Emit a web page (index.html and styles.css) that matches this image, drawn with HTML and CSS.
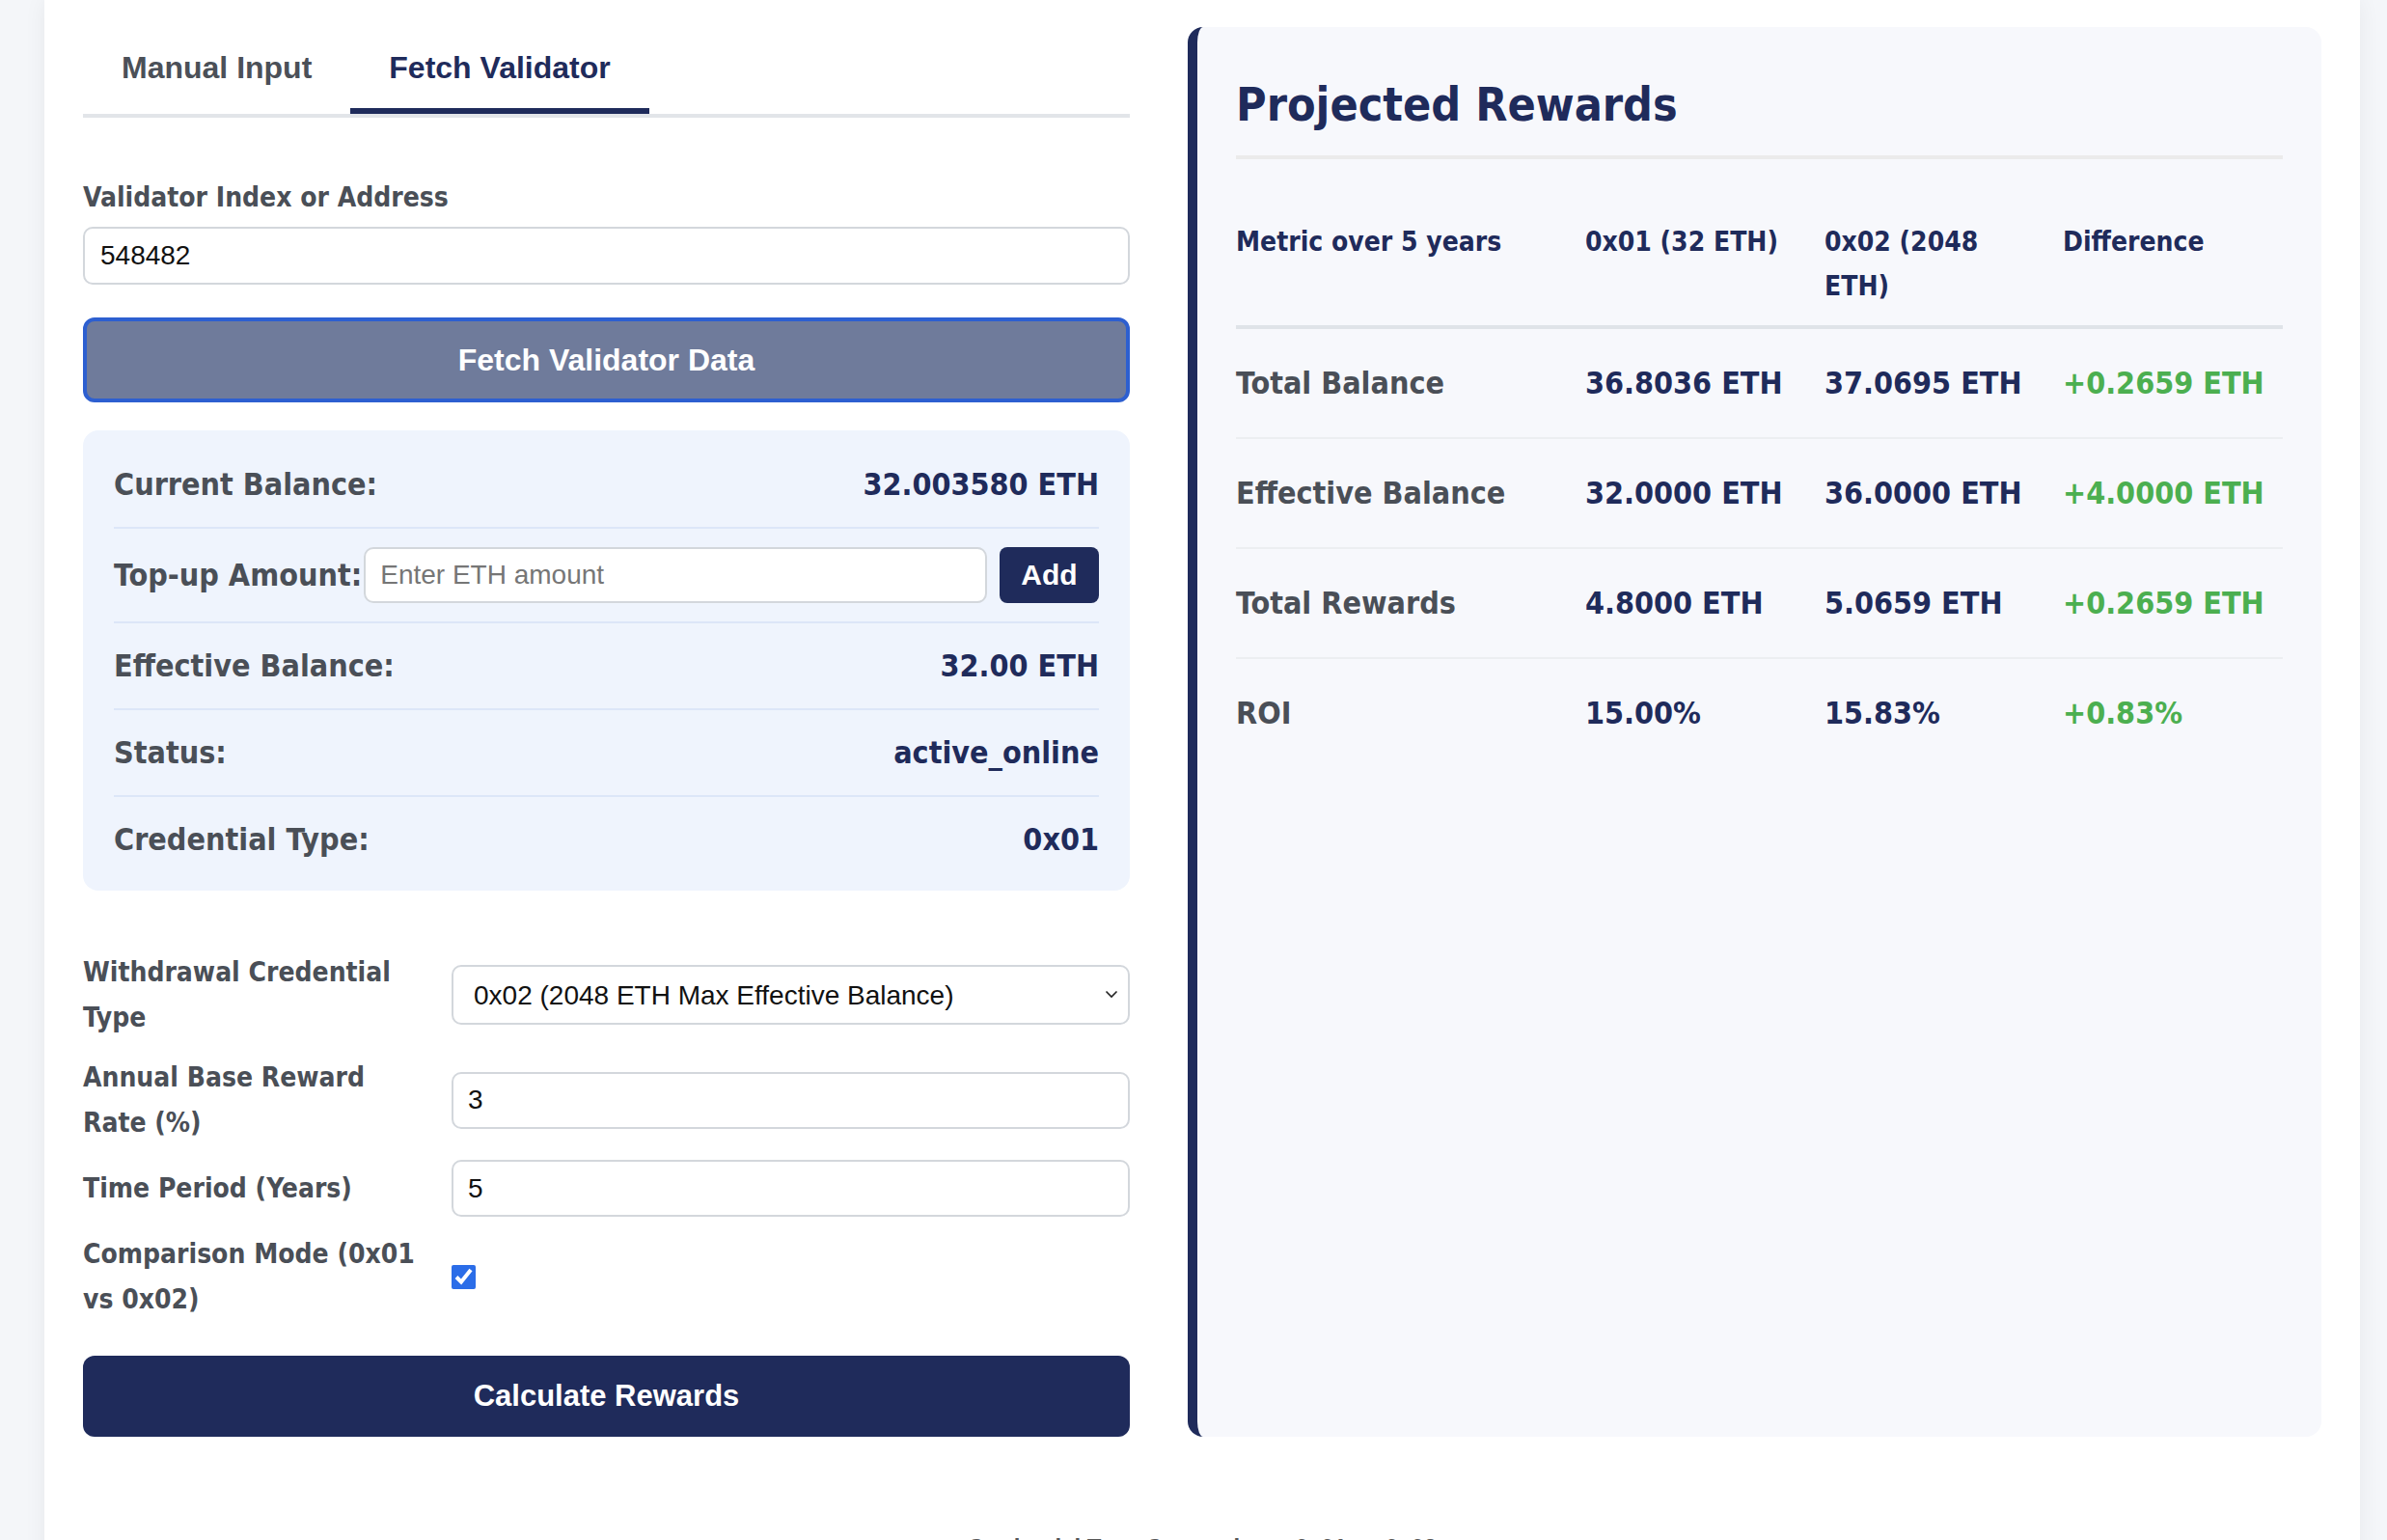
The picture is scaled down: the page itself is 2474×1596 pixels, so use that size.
FILE: index.html
```html
<!DOCTYPE html>
<html lang="en">
<head>
<meta charset="utf-8">
<title>Validator Rewards Calculator</title>
<link rel="stylesheet" href="styles.css">
</head>
<body>
<main class="container">
  <div class="calc-grid">
    <section class="input-col">
      <div class="tabs">
        <button class="tab">Manual Input</button>
        <button class="tab active">Fetch Validator</button>
      </div>

      <label class="field-label" for="vidx">Validator Index or Address</label>
      <input id="vidx" class="text-input" type="text" value="548482">
      <button class="btn-fetch">Fetch Validator Data</button>

      <div class="info-box">
        <div class="info-row">
          <span class="info-label">Current Balance:</span>
          <span class="info-value">32.003580 ETH</span>
        </div>
        <div class="info-row topup">
          <span class="info-label">Top-up Amount:</span>
          <input class="topup-input" type="text" placeholder="Enter ETH amount">
          <button class="btn-add">Add</button>
        </div>
        <div class="info-row">
          <span class="info-label">Effective Balance:</span>
          <span class="info-value">32.00 ETH</span>
        </div>
        <div class="info-row">
          <span class="info-label">Status:</span>
          <span class="info-value">active_online</span>
        </div>
        <div class="info-row">
          <span class="info-label">Credential Type:</span>
          <span class="info-value">0x01</span>
        </div>
      </div>

      <div class="form-grid">
        <label class="form-label" for="ctype">Withdrawal Credential Type</label>
        <div class="select-wrap">
          <select id="ctype" class="select">
            <option>0x02 (2048 ETH Max Effective Balance)</option>
            <option>0x01 (32 ETH Max Effective Balance)</option>
          </select>
          <svg class="chev" width="14" height="9" viewBox="0 0 14 9" aria-hidden="true"><polyline points="1.5,1.5 7,7 12.5,1.5" fill="none" stroke="#222" stroke-width="1.6"/></svg>
        </div>

        <label class="form-label" for="rate">Annual Base Reward Rate (%)</label>
        <input id="rate" class="form-input" type="text" value="3">

        <label class="form-label" for="years">Time Period (Years)</label>
        <input id="years" class="form-input" type="text" value="5">

        <label class="form-label" for="cmp">Comparison Mode (0x01 vs 0x02)</label>
        <div class="check-cell"><input id="cmp" class="checkbox" type="checkbox" checked></div>
      </div>

      <button class="btn-calc">Calculate Rewards</button>
    </section>

    <section class="results">
      <h2 class="results-title">Projected Rewards</h2>
      <table class="results-table">
        <colgroup>
          <col class="c1"><col class="c2"><col class="c3"><col class="c4">
        </colgroup>
        <thead>
          <tr>
            <th>Metric over 5 years</th>
            <th>0x01 (32 ETH)</th>
            <th>0x02 (2048 ETH)</th>
            <th>Difference</th>
          </tr>
        </thead>
        <tbody>
          <tr>
            <td class="metric">Total Balance</td>
            <td>36.8036 ETH</td>
            <td>37.0695 ETH</td>
            <td class="diff">+0.2659 ETH</td>
          </tr>
          <tr>
            <td class="metric">Effective Balance</td>
            <td>32.0000 ETH</td>
            <td>36.0000 ETH</td>
            <td class="diff">+4.0000 ETH</td>
          </tr>
          <tr>
            <td class="metric">Total Rewards</td>
            <td>4.8000 ETH</td>
            <td>5.0659 ETH</td>
            <td class="diff">+0.2659 ETH</td>
          </tr>
          <tr>
            <td class="metric">ROI</td>
            <td>15.00%</td>
            <td>15.83%</td>
            <td class="diff">+0.83%</td>
          </tr>
        </tbody>
      </table>
    </section>
  </div>

  <h3 class="footer-title">Credential Type Comparison: 0x01 vs 0x02</h3>
</main>
</body>
</html>
```

FILE: styles.css
```css
html, body {
  margin: 0;
  padding: 0;
}

body {
  background: #f4f6f9;
  font-family: "DejaVu Sans Condensed", "DejaVu Sans", sans-serif;
  color: #1f2b5b;
  overflow: hidden;
}

.container {
  width: 2400px;
  min-height: 1700px;
  margin-left: 46px;
  box-sizing: border-box;
  padding: 28px 40px 0;
  background: #ffffff;
  box-shadow: 0 0 22px rgba(0, 0, 0, 0.06);
}

.calc-grid {
  display: grid;
  grid-template-columns: 1085px 1fr;
  column-gap: 60px;
  align-items: stretch;
}

/* ---------- tabs ---------- */
.tabs {
  display: flex;
  border-bottom: 4px solid #e2e5e9;
}

.tab {
  font-family: "Liberation Sans", Arial, sans-serif;
  font-weight: bold;
  font-size: 32px;
  line-height: 36px;
  padding: 24px 40px;
  margin: 0;
  border: none;
  border-bottom: 6px solid transparent;
  background: none;
  color: #4b5058;
}

.tab.active {
  color: #1f2b5b;
  border-bottom-color: #1f2b5b;
}

/* ---------- fetch pane ---------- */
.field-label {
  display: block;
  margin: 66px 0 14px;
  font-weight: bold;
  font-size: 28px;
  line-height: 33px;
  color: #4a4f57;
}

.text-input,
.form-input,
.topup-input,
.select {
  box-sizing: border-box;
  width: 100%;
  border: 2px solid #d3d7dc;
  border-radius: 10px;
  background: #ffffff;
  font-family: "Liberation Sans", Arial, sans-serif;
  font-size: 28px;
  color: #111111;
  outline: none;
}

.text-input {
  display: block;
  height: 60px;
  padding: 0 16px;
}

.btn-fetch {
  display: block;
  width: 100%;
  height: 88px;
  margin-top: 34px;
  background: #6f7b9b;
  border: 4px solid #2d5fd0;
  border-radius: 12px;
  color: #ffffff;
  font-family: "Liberation Sans", Arial, sans-serif;
  font-weight: bold;
  font-size: 32px;
}

.info-box {
  margin-top: 29px;
  padding: 12px 32px 9px;
  background: #eff4fd;
  border-radius: 16px;
}

.info-row {
  display: flex;
  justify-content: space-between;
  align-items: center;
  padding: 19px 0;
  border-bottom: 2px solid #dce6f8;
  font-size: 32px;
  line-height: 50px;
  font-weight: bold;
}

.info-row:last-child {
  border-bottom: none;
}

.info-label {
  color: #4a4f57;
  white-space: nowrap;
}

.info-value {
  color: #1f2b5b;
}

.info-row.topup {
  justify-content: flex-start;
}

.topup-input {
  flex: 1;
  width: auto;
  min-width: 0;
  height: 58px;
  margin-left: 2px;
  padding: 0 15px;
  font-weight: normal;
}

.topup-input::placeholder {
  color: #767676;
}

.btn-add {
  width: 103px;
  height: 58px;
  margin-left: 13px;
  background: #1f2b5b;
  border: none;
  border-radius: 8px;
  color: #ffffff;
  font-family: "Liberation Sans", Arial, sans-serif;
  font-weight: bold;
  font-size: 30px;
}

/* ---------- settings form ---------- */
.form-grid {
  display: grid;
  grid-template-columns: 352px 1fr;
  column-gap: 30px;
  row-gap: 15px;
  align-items: center;
  margin-top: 61px;
}

.form-label {
  display: block;
  font-weight: bold;
  font-size: 28px;
  line-height: 47px;
  color: #4a4f57;
}

.form-input {
  display: block;
  height: 59px;
  padding: 0 15px;
}

.select-wrap {
  position: relative;
}

.select {
  display: block;
  height: 62px;
  padding: 0 40px 0 21px;
  appearance: none;
  -webkit-appearance: none;
}

.chev {
  position: absolute;
  right: 12px;
  top: 26px;
  pointer-events: none;
}

.check-cell {
  display: flex;
  align-items: center;
}

.checkbox {
  width: 25px;
  height: 25px;
  margin: 0;
  accent-color: #2b6de8;
}

.btn-calc {
  display: block;
  width: 100%;
  height: 84px;
  margin-top: 35px;
  background: #1f2b5b;
  border: none;
  border-radius: 12px;
  color: #ffffff;
  font-family: "Liberation Sans", Arial, sans-serif;
  font-weight: bold;
  font-size: 31px;
}

/* ---------- results panel ---------- */
.results {
  background: #f7f8fc;
  border-left: 10px solid #1f2b5b;
  border-radius: 16px;
  padding: 40px;
}

.results-title {
  margin: 12px 0 0;
  padding-bottom: 25px;
  border-bottom: 4px solid #ebebeb;
  font-size: 48px;
  line-height: 56px;
  font-weight: bold;
  color: #1f2b5b;
}

.results-table {
  width: 100%;
  margin-top: 46px;
  border-collapse: collapse;
  table-layout: fixed;
}

.results-table col.c1 { width: 362px; }
.results-table col.c2 { width: 248px; }
.results-table col.c3 { width: 247px; }
.results-table col.c4 { width: 228px; }

.results-table th {
  text-align: left;
  vertical-align: top;
  padding: 17px 20px 17px 0;
  border-bottom: 4px solid #dfe3e8;
  font-size: 28px;
  line-height: 46px;
  font-weight: bold;
  color: #1f2b5b;
}

.results-table td {
  padding: 32px 20px 32px 0;
  border-bottom: 2px solid #eceef1;
  font-size: 32px;
  line-height: 48px;
  font-weight: bold;
  color: #1f2b5b;
  white-space: nowrap;
}

.results-table tbody tr:last-child td {
  border-bottom: none;
}

.results-table td.metric {
  color: #4a4f57;
}

.results-table td.diff {
  color: #4caf50;
}

/* ---------- footer ---------- */
.footer-title {
  margin: 100px 0 0;
  text-align: center;
  font-family: "Liberation Sans", Arial, sans-serif;
  font-weight: bold;
  font-size: 24px;
  line-height: 30px;
  color: #555555;
}
```
